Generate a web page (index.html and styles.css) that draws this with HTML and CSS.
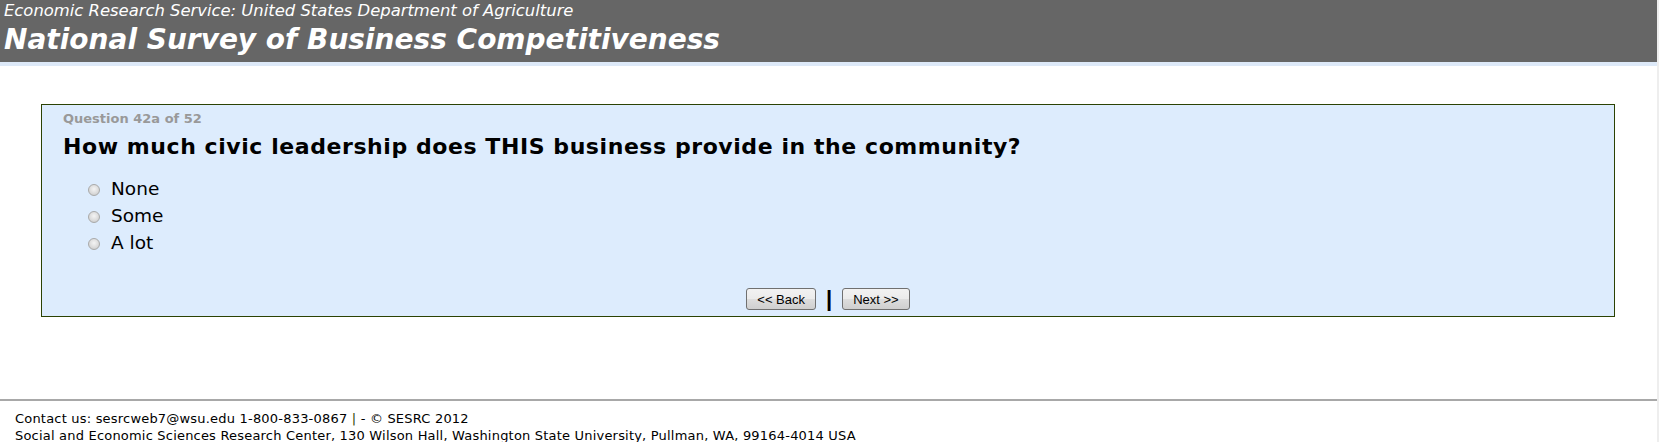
FILE: index.html
```html
<!DOCTYPE html>
<html lang="en">
  <head>
    <meta charset="UTF-8" />
    <title>National Survey of Business Competitiveness</title>
    <link rel="stylesheet" href="styles.css">
  </head>
  <body>
    <div class="page">
      <div class="header">
        <div class="agency">Economic Research Service: United States Department of Agriculture</div>
        <div class="title">National Survey of Business Competitiveness</div>
      </div>
      <div class="header-strip"></div>

      <div class="main">
        <form class="question-box">
          <div class="question-num">Question 42a of 52</div>
          <h1 class="question-text">How much civic leadership does THIS business provide in the community?</h1>
          <div class="answers">
            <label class="answer"><input type="radio" name="q42a" value="1" /> None</label>
            <label class="answer"><input type="radio" name="q42a" value="2" /> Some</label>
            <label class="answer"><input type="radio" name="q42a" value="3" /> A lot</label>
          </div>
          <div class="nav-buttons">
            <button type="button">&lt;&lt; Back</button>
            <span class="sep">|</span>
            <button type="submit">Next &gt;&gt;</button>
          </div>
        </form>
      </div>

      <div class="footer">
        <div>Contact us: sesrcweb7@wsu.edu 1-800-833-0867 <span class="bar">|</span> - &copy; SESRC 2012</div>
        <div>Social and Economic Sciences Research Center, 130 Wilson Hall, Washington State University, Pullman, WA, 99164-4014 USA</div>
      </div>
    </div>
  </body>
</html>
```

FILE: styles.css
```css
* {
  margin: 0;
  padding: 0;
  box-sizing: border-box;
}
html {
  background-color: #eeeeee;
}
body {
  font-family: "DejaVu Sans", Verdana, sans-serif;
  color: #000;
}
.page {
  width: calc(100% - 2px);
  min-height: 442px;
  background-color: #fff;
}
.header {
  height: 62px;
  background-color: #666666;
  color: #fff;
  padding-left: 4px;
  font-style: italic;
}
.agency {
  font-size: 16.4px;
  line-height: 22px;
}
.title {
  font-size: 28px;
  font-weight: bold;
  line-height: 36px;
}
.header-strip {
  height: 4px;
  background-color: #dde9f8;
}
.main {
  padding: 38px 42px 0 41px;
  height: 333px;
}
.question-box {
  height: 213px;
  background-color: #ddecfd;
  border: 1px solid #2b4203;
  padding: 6px 21px 0 21px;
  display: flex;
  flex-direction: column;
}
.question-num {
  font-size: 13px;
  font-weight: bold;
  color: #999999;
  line-height: 16px;
}
.question-text {
  font-size: 22px;
  font-weight: bold;
  line-height: 28px;
  letter-spacing: 0.57px;
  margin-top: 6px;
}
.answers {
  display: flex;
  flex-direction: column;
  padding: 14px 0 0 25px;
}
.answer {
  display: flex;
  align-items: center;
  gap: 11px;
  font-size: 18.5px;
  line-height: 27px;
}
.answer input {
  appearance: none;
  width: 12px;
  height: 12px;
  border-radius: 50%;
  border: 1px solid #a9a9a9;
  background: radial-gradient(circle at 50% 40%, #f4f4f4 0, #dcdcdc 55%, #c4c4c4 100%);
  margin: 3px 0 0 0;
}
.nav-buttons {
  margin-top: auto;
  margin-bottom: 6px;
  display: flex;
  justify-content: center;
  align-items: center;
  gap: 10px;
}
.nav-buttons button {
  font-family: "Liberation Sans", Arial, sans-serif;
  font-size: 13px;
  height: 22px;
  padding: 0 10px;
  border: 1px solid #707070;
  border-radius: 3px;
  background: linear-gradient(#f2f2f2 0, #ebebeb 50%, #dddddd 51%, #cfcfcf 100%);
  color: #000;
}
.nav-buttons .sep {
  font-family: "Liberation Sans", Arial, sans-serif;
  font-size: 22px;
  font-weight: bold;
  line-height: 22px;
}
.footer {
  border-top: 2px solid #a8a8a8;
  padding: 9px 15px 0 15px;
  font-size: 13px;
  line-height: 17px;
  letter-spacing: 0.2px;
}
.footer .bar {
  color: #2b4203;
}
```
